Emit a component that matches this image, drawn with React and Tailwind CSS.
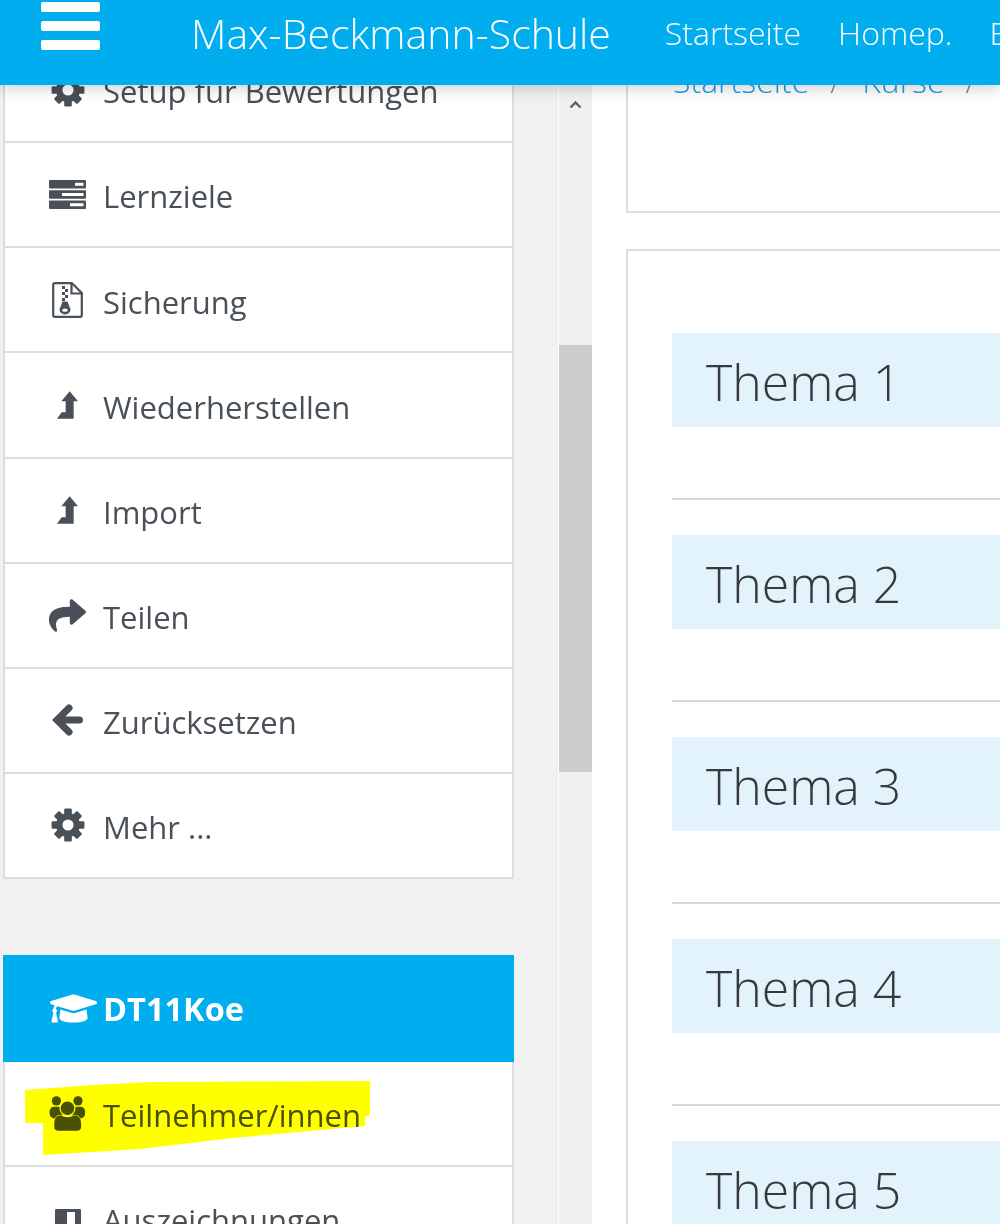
import React from "react";
import { FaShare, FaGraduationCap } from "react-icons/fa";

const font = { fontFamily: '"Open Sans", "Noto Sans", sans-serif' };

function GearIcon() {
  return (
    <svg width="34" height="34" viewBox="0 0 34 34" fill="currentColor">
      <g>
        {[0, 45, 90, 135].map((a) => (
          <rect key={a} x="13.2" y="0.6" width="7.6" height="32.8" rx="1.2" transform={`rotate(${a} 17 17)`} />
        ))}
      </g>
      <circle cx="17" cy="17" r="12" />
      <circle cx="17" cy="17" r="5.6" fill="#ffffff" />
    </svg>
  );
}

function TasksIcon() {
  return (
    <svg width="37" height="29" viewBox="0 0 37 29" fill="currentColor">
      <rect x="0" y="0" width="37" height="8.5" rx="1" />
      <rect x="0" y="10.2" width="37" height="8.5" rx="1" />
      <rect x="0" y="20.4" width="37" height="8.5" rx="1" />
      <rect x="26" y="2.8" width="8.5" height="3" fill="#ffffff" />
      <rect x="13" y="13" width="21.5" height="3" fill="#ffffff" />
      <rect x="21" y="23.2" width="13.5" height="3" fill="#ffffff" />
    </svg>
  );
}

function ZipIcon() {
  return (
    <svg width="31" height="36" viewBox="0 0 31 36" fill="none" stroke="currentColor">
      <path d="M20 1.2 H3 Q1.2 1.2 1.2 3 V33 Q1.2 34.8 3 34.8 H28 Q29.8 34.8 29.8 33 V11 Z" strokeWidth="2.2" strokeLinejoin="round" />
      <path d="M19.5 1.5 V11.5 H29.5" strokeWidth="2.2" />
      <g fill="currentColor" stroke="none">
        <rect x="10" y="4" width="3" height="3" />
        <rect x="13" y="7" width="3" height="3" />
        <rect x="10" y="10" width="3" height="3" />
        <rect x="13" y="13" width="3" height="3" />
        <rect x="10" y="16" width="3" height="3" />
        <path d="M10.5 19.5 H15.5 L18.5 27.5 A5.5 5 0 1 1 7.5 27.5 Z" />
      </g>
      <ellipse cx="13" cy="28.2" rx="2.8" ry="1.6" fill="#ffffff" stroke="none" />
    </svg>
  );
}

function LevelUpIcon() {
  return (
    <svg width="21" height="28" viewBox="82 362 63 83" fill="currentColor">
      <polygon points="120,362 145,392 132,392 132,445 82,445 96,425 108,425 108,392 95,392" />
    </svg>
  );
}

function ShareIcon() {
  return <FaShare className="text-[37px]" />;
}

function ArrowLeftIcon() {
  return (
    <svg width="31" height="32" viewBox="0 0 31 32" fill="none" stroke="currentColor" strokeWidth="7">
      <path d="M6 16 H27.5" strokeLinecap="round" />
      <path d="M17 4 L5 16 L17 28" strokeLinecap="round" strokeLinejoin="miter" />
    </svg>
  );
}

function UsersIcon() {
  return (
    <svg width="40" height="37" viewBox="28 33 120 112" fill="currentColor">
      <circle cx="52" cy="48" r="15" />
      <circle cx="122" cy="48" r="15" />
      <rect x="30" y="67" width="42" height="38" rx="15" />
      <rect x="103" y="67" width="42" height="38" rx="15" />
      <circle cx="88" cy="72" r="26" fill="#ffffff" />
      <circle cx="88" cy="72" r="22" />
      <path d="M65 95 Q88 108 111 95 Q132 96 132 122 V132 Q132 145 118 145 H59 Q45 145 45 132 V122 Q45 96 65 95 Z" stroke="#ffffff" strokeWidth="4" paintOrder="stroke" />
    </svg>
  );
}

function BadgeIcon() {
  return (
    <svg className="mt-[6px]" width="26" height="26" viewBox="0 0 26 26" fill="currentColor">
      <rect width="26" height="26" rx="1" />
      <rect x="12" y="3" width="8" height="23" fill="#ffffff" />
    </svg>
  );
}

function Row({ icon: Icon, label }) {
  return (
    <div className="flex h-[105.125px] items-center border-b-2 border-[#dddddd] bg-white pl-[44px] text-[#495057]">
      <span className="flex w-[37px] justify-center">
        <Icon />
      </span>
      <span className="ml-[17px] pt-[4px] text-[31px] whitespace-nowrap">{label}</span>
    </div>
  );
}

const topRows = [
  { icon: GearIcon, label: "Setup für Bewertungen" },
  { icon: TasksIcon, label: "Lernziele" },
  { icon: ZipIcon, label: "Sicherung" },
  { icon: LevelUpIcon, label: "Wiederherstellen" },
  { icon: LevelUpIcon, label: "Import" },
  { icon: ShareIcon, label: "Teilen" },
  { icon: ArrowLeftIcon, label: "Zurücksetzen" },
  { icon: GearIcon, label: "Mehr ..." },
];

export default function App() {
  return (
    <div className="relative h-[1224px] w-[1000px] overflow-hidden bg-white" style={font}>
      <header className="absolute inset-x-0 top-0 z-10 flex h-[85px] items-start bg-[#00aeef] text-white shadow-[0_4px_14px_rgba(0,0,0,0.18)]">
        <div className="ml-[41px] mt-[2px] flex w-[59px] shrink-0 flex-col gap-[9px]">
          <span className="h-[10px] rounded-[2px] bg-white" />
          <span className="h-[10px] rounded-[2px] bg-white" />
          <span className="h-[10px] rounded-[2px] bg-white" />
        </div>
        <div className="ml-[91px] mt-[5px] shrink-0 text-[41px] leading-[56px] font-light whitespace-nowrap">Max-Beckmann-Schule</div>
        <nav className="ml-[54px] mt-[10px] flex shrink-0 gap-[37px] text-[32px] leading-[46px] font-light whitespace-nowrap">
          <span>Startseite</span>
          <span>Homep.</span>
          <span>Bereiche</span>
        </nav>
      </header>

      <div className="flex h-full">
        <aside className="h-full w-[558px] shrink-0 overflow-hidden bg-[#f1f1f1] pl-[3px] pr-[44px] pt-[38px]">
          <div className="border-x-2 border-[#dddddd]">
            {topRows.map((r, i) => (
              <Row key={i} {...r} />
            ))}
          </div>
          <div className="relative mt-[76px]">
            <div className="flex h-[107px] items-center bg-[#00aeef] pl-[46px] text-white">
              <span className="flex w-[48px] justify-center">
                <FaGraduationCap className="text-[47px]" />
              </span>
              <span className="ml-[6px] pt-[2px] text-[32.5px] font-bold">DT11Koe</span>
            </div>
            <div className="border-x-2 border-[#dddddd]">
              <Row icon={UsersIcon} label="Teilnehmer/innen" />
              <Row icon={BadgeIcon} label="Auszeichnungen" />
            </div>
            <svg className="pointer-events-none absolute left-0 top-[126px] mix-blend-multiply" width="400" height="80" viewBox="3 1081 400 80">
              <polygon fill="#ffff00" points="25,1090 93,1085 150,1082 370,1081 370,1115 365,1117 365,1126 233,1138 140,1149 43,1155 43,1123 25,1123" />
            </svg>
          </div>
        </aside>

        <div className="relative h-full w-[34px] shrink-0 border-l border-white bg-[#f0f0f0]">
          <svg className="absolute left-[10px] top-[100px]" width="13" height="9" viewBox="0 0 13 9">
            <path d="M1.5 7.5 L6.5 2.5 L11.5 7.5" fill="none" stroke="#606060" strokeWidth="2.4" />
          </svg>
          <div className="absolute inset-x-0 top-[345px] h-[427px] bg-[#cdcdcd]" />
        </div>

        <main className="h-full min-w-0 flex-1 overflow-hidden pl-[34px]">
          <div className="-mt-[20px] h-[233px] w-[500px] border-2 border-[#dddddd] pl-[45px] pt-[76px] text-[32px] leading-[46px] font-light whitespace-nowrap">
            <span className="text-[#1c9ee6]">Startseite</span>
            <span className="mx-[21px] text-[#868e96]">/</span>
            <span className="text-[#1c9ee6]">Kurse</span>
            <span className="mx-[21px] text-[#868e96]">/</span>
          </div>
          <div className="mt-[36px] w-[500px] border-2 border-[#dddddd] pl-[44px] pt-[82px]">
            {[1, 2, 3, 4, 5].map((n) => (
              <div key={n} className="mb-[35px] border-b-2 border-[#d8d8d8] pb-[71px] last:border-b-0">
                <div className="flex h-[94px] items-center bg-[#e3f3fb] pl-[34px] pt-[4px] text-[50px] font-light text-[#373a3c]">Thema {n}</div>
              </div>
            ))}
          </div>
        </main>
      </div>
    </div>
  );
}
